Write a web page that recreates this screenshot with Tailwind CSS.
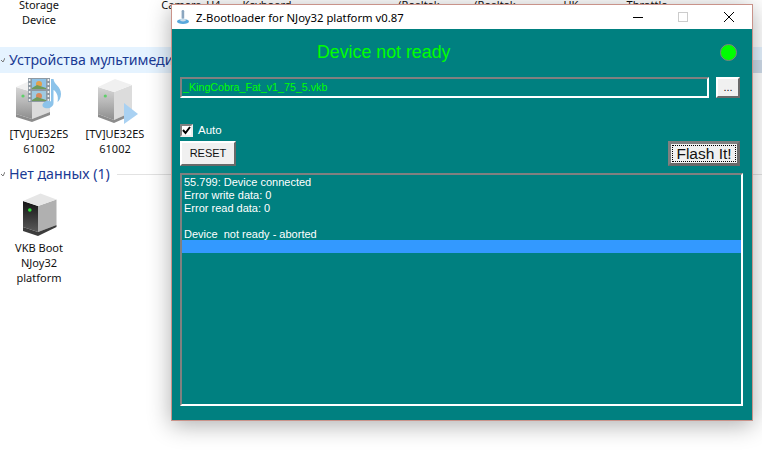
<!DOCTYPE html>
<html>
<head>
<meta charset="utf-8">
<script src="https://cdn.jsdelivr.net/npm/@tailwindcss/browser@4"></script>
</head>
<body class="m-0">
<div class="relative w-[762px] h-[450px] overflow-hidden bg-white font-['Noto_Sans',sans-serif] text-[11px] leading-[15px] text-[#111]">

  <!-- Explorer behind the window -->
  <div class="grid grid-cols-[repeat(10,76px)] pl-[1px] -mt-[3px] h-[50px] text-center">
    <div>Storage<br>Device</div><div></div><div>Camera_U4</div><div>Keyboard</div><div></div><div>(Realtek</div><div>(Realtek</div><div>UK</div><div>Throttle</div>
  </div>
  <div class="flex items-center h-[26px] bg-[#e5f3ff]">
    <svg class="ml-[1px] w-[4px] h-[6px]" viewBox="0 0 4 6"><path d="M0 3 L2 5 L4 1" fill="none" stroke="#777" stroke-width="1"/></svg>
    <span class="ml-[4px] -translate-y-px text-[14.2px] text-[#1a3a94] whitespace-nowrap">Устройства мультимедиа</span>
    <div class="ml-auto mt-[13px] w-[10px] h-[13px] bg-[#cfdcea]"></div>
  </div>
  <div class="flex pl-[1px] pt-[3px] h-[88px] text-center">
    <div class="w-[76px]">
      <svg class="mx-auto block w-[48px] h-[48px]" viewBox="0 0 48 48">
        <defs>
          <linearGradient id="lf" x1="0" y1="0" x2="0" y2="1"><stop offset="0" stop-color="#d6d6d6"/><stop offset="0.45" stop-color="#b8b8b8"/><stop offset="1" stop-color="#8e8e8e"/></linearGradient>
          <linearGradient id="df" x1="0" y1="0" x2="0" y2="1"><stop offset="0" stop-color="#141414"/><stop offset="1" stop-color="#5a5a5a"/></linearGradient>
        </defs>
        <path d="M1 11 L17 16 L17 43 L1 38Z" fill="url(#lf)"/>
        <path d="M17 16 L35 10 L35 36 L17 43Z" fill="#dcdcdc"/>
        <path d="M1 11 L17 4 L35 10 L17 16Z" fill="#f0f0f0"/>
        <path d="M1 38 L17 43 L35 36 L35 39 L17 46 L1 41Z" fill="#8c8c8c"/>
        <circle cx="8" cy="20" r="1.6" fill="#5fd06a"/>
        <rect x="13" y="2" width="22" height="24" fill="#8f9aa3"/>
        <path d="M13.8 3h1.6v2h-1.6zM13.8 7h1.6v2h-1.6zM13.8 11h1.6v2h-1.6zM13.8 15h1.6v2h-1.6zM13.8 19h1.6v2h-1.6zM13.8 23h1.6v2h-1.6zM32.6 3h1.6v2h-1.6zM32.6 7h1.6v2h-1.6zM32.6 11h1.6v2h-1.6zM32.6 15h1.6v2h-1.6zM32.6 19h1.6v2h-1.6zM32.6 23h1.6v2h-1.6z" fill="#f2f2f2"/>
        <rect x="17" y="3" width="14" height="10" fill="#8fc2e6"/>
        <rect x="17" y="15" width="14" height="10" fill="#9fc9e0"/>
        <circle cx="24" cy="8" r="3" fill="#e2a14c"/>
        <circle cx="24" cy="20" r="3" fill="#d98a5c"/>
        <path d="M17 12 L22 9 L31 12 L31 13 L17 13Z" fill="#6f9a5c"/>
        <path d="M17 24 L22 21 L31 24 L31 25 L17 25Z" fill="#6f9a5c"/>
        <path d="M36 3 L38.5 3 C39 9 46 10 46 18 C46 22 44 25 42.5 26 C44 20 41 15 38.5 14 L38.5 27 C38.5 31 34 33 30 32 C27 31 26.5 28 29.5 26 C32 24.5 34.5 24.5 36 25.5Z" fill="#8cc3ea"/>
      </svg>
      <div class="mt-[2px]">[TV]UE32ES<br>61002</div>
    </div>
    <div class="w-[76px]">
      <svg class="mx-auto block w-[48px] h-[48px]" viewBox="0 0 48 48">
        <path d="M7 11 L23 16 L23 44 L7 38Z" fill="url(#lf)"/>
        <path d="M23 16 L41 9 L41 36 L23 44Z" fill="#dcdcdc"/>
        <path d="M7 11 L24 3 L41 9 L23 16Z" fill="#f0f0f0"/>
        <path d="M7 38 L23 44 L41 36 L41 39 L23 47 L7 41Z" fill="#8c8c8c"/>
        <circle cx="14.3" cy="20" r="1.6" fill="#5fd06a"/>
        <path d="M33 27 L47 38 L33 48Z" fill="#a9d1f2"/>
      </svg>
      <div class="mt-[2px]">[TV]UE32ES<br>61002</div>
    </div>
    <div class="ml-auto w-[10px]"></div>
  </div>
  <div class="flex items-center h-[26px]">
    <svg class="ml-[1px] w-[4px] h-[6px]" viewBox="0 0 4 6"><path d="M0 3 L2 5 L4 1" fill="none" stroke="#777" stroke-width="1"/></svg>
    <span class="ml-[4px] -translate-y-px text-[14.2px] text-[#1a3a94] whitespace-nowrap">Нет данных (1)</span>
    <div class="ml-[7px] grow h-px bg-[#e2e2e2]"></div>
  </div>
  <div class="w-[76px] ml-[1px] mt-[3px] text-center">
    <svg class="mx-auto block w-[48px] h-[48px]" viewBox="0 0 48 48">
      <path d="M8 11 L23 16 L23 42 L8 37Z" fill="url(#df)"/>
      <path d="M23 16 L41.5 9.5 L41.5 35 L23 42Z" fill="#b0b0b0"/>
      <path d="M8 11 L25.5 3.5 L41.5 9.5 L23 16Z" fill="#e6e6e6"/>
      <path d="M8 37 L23 42 L41.5 35 L41.5 37 L23 46 L8 41Z" fill="#3c3c3c"/>
      <circle cx="14.8" cy="20" r="1.8" fill="#2fe03a"/>
    </svg>
    <div class="mt-[2px]">VKB Boot<br>NJoy32<br>platform</div>
  </div>

  <!-- Floating application window -->
  <div class="absolute left-[171px] top-[4px] w-[582px] h-[417px] flex flex-col border border-[#c9938a] shadow-[0_4px_22px_rgba(0,0,0,0.32)] font-['Liberation_Sans',sans-serif] text-[11px] bg-[#008080]">
    <div class="flex items-center h-[24px] bg-white shrink-0">
      <svg class="ml-[4px] w-[14px] h-[16px]" viewBox="0 0 14 16">
        <rect x="5.6" y="1" width="2.6" height="9" rx="1.2" fill="#8ba6bf"/>
        <ellipse cx="7" cy="12.5" rx="6" ry="2.6" fill="#58a8dc"/>
        <ellipse cx="7" cy="11" rx="3" ry="1.4" fill="#c8dcea"/>
      </svg>
      <span class="ml-[6px] font-['Noto_Sans',sans-serif] text-[11.3px] text-black whitespace-nowrap">Z-Bootloader for NJoy32 platform v0.87</span>
      <svg class="ml-auto mr-[35px] w-[10px] h-[10px]" viewBox="0 0 10 10"><path d="M0 5.5 H10" stroke="#000" stroke-width="1"/></svg>
      <svg class="mr-[36px] w-[10px] h-[10px]" viewBox="0 0 10 10"><rect x="0.5" y="0.5" width="9" height="9" fill="none" stroke="#cccccc"/></svg>
      <svg class="mr-[18px] w-[10px] h-[10px]" viewBox="0 0 10 10"><path d="M0 0 L10 10 M10 0 L0 10" stroke="#000" stroke-width="1"/></svg>
    </div>
    <div class="flex-1 pl-[8px] pr-[9px] flex flex-col">
      <div class="flex items-center h-[48px] pr-[6px]">
        <span class="ml-[137px] text-[17.8px] text-[#00ff00] leading-none">Device not ready</span>
        <div class="ml-auto -translate-y-px w-[17px] h-[17px] rounded-full bg-[#00ff00] border border-[#808080]"></div>
      </div>
      <div class="flex h-[21px]">
        <div class="w-[529px] h-[21px] border-2 border-t-[#808080] border-l-[#808080] border-r-white border-b-white text-[#00ff00] text-[10.7px] pl-[1px] leading-[17px] whitespace-nowrap">_KingCobra_Fat_v1_75_5.vkb</div>
        <div class="ml-[7px] w-[24px] h-[21px] bg-[#f0f0f0] border-2 border-t-white border-l-white border-r-[#696969] border-b-[#696969] text-[#111] flex items-center justify-center">...</div>
      </div>
      <div class="flex items-center h-[13px] mt-[26px]">
        <div class="w-[13px] h-[13px] bg-white border-2 border-t-[#808080] border-l-[#808080] border-r-[#eeeeee] border-b-[#eeeeee] flex items-center justify-center">
          <svg class="w-[9px] h-[9px]" viewBox="0 0 9 9"><path d="M1 4 L3.5 7 L8 1" fill="none" stroke="#000" stroke-width="2"/></svg>
        </div>
        <span class="ml-[5px] text-white text-[11.5px]">Auto</span>
      </div>
      <div class="flex justify-between h-[25px] mt-[4px] pr-[3px]">
        <div class="w-[56px] h-[25px] bg-[#f0f0f0] border-2 border-t-white border-l-white border-r-[#696969] border-b-[#696969] text-[#111] flex items-center justify-center">RESET</div>
        <div class="w-[72px] h-[25px] bg-[#f0f0f0] border-[3px] border-t-[#808080] border-l-[#808080] border-r-[#696969] border-b-[#696969] p-px">
          <div class="w-full h-full border border-dotted border-black flex items-center justify-center text-[15.5px] text-[#111] leading-none">Flash It!</div>
        </div>
      </div>
      <div class="mt-[7px] w-[563px] h-[233px] border-2 border-t-[#808080] border-l-[#808080] border-r-white border-b-white text-white leading-[13px]">
        <div class="pl-[2px] pt-px h-[13px]">55.799: Device connected</div>
        <div class="pl-[2px] pt-px h-[13px]">Error write data: 0</div>
        <div class="pl-[2px] pt-px h-[13px]">Error read data: 0</div>
        <div class="pl-[2px] h-[13px]"></div>
        <div class="pl-[2px] pt-px h-[13px] whitespace-pre">Device  not ready - aborted</div>
        <div class="h-[13px] bg-[#3399ff]"></div>
      </div>
    </div>
  </div>
</div>
</body>
</html>
